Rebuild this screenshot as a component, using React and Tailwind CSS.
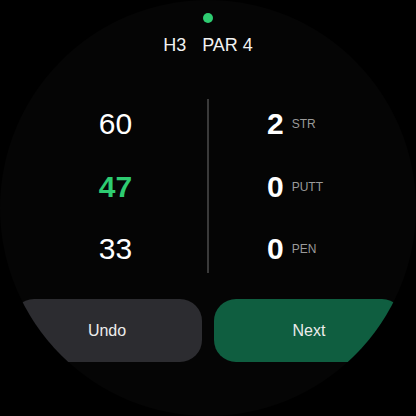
import React from 'react';

const distances = [
  { value: 60, active: false },
  { value: 47, active: true },
  { value: 33, active: false },
];

const counters = [
  { value: 2, label: 'STR' },
  { value: 0, label: 'PUTT' },
  { value: 0, label: 'PEN' },
];

const App = () => {
  return (
    <div className="w-[416px] h-[416px] bg-black" style={{ fontFamily: '"Liberation Sans", Arial, sans-serif' }}>
      <div className="w-full h-full rounded-full overflow-hidden bg-[#050505] flex flex-col items-center">
        {/* GPS status dot */}
        <div className="mt-[13px] w-2.5 h-2.5 rounded-full bg-[#2ecc71]" />

        {/* Hole header */}
        <div className="mt-[10px] flex items-center gap-4 text-[18px] leading-6 text-[#f2f2f2]">
          <span>H3</span>
          <span>PAR 4</span>
        </div>

        {/* Distances + score */}
        <div className="mt-[42px] w-full px-6 grid grid-cols-[1fr_2px_1fr] h-[174px]">
          <div className="flex flex-col items-center pt-[7px] gap-[26.5px]">
            {distances.map((d) => (
              <div
                key={d.value}
                className={
                  d.active
                    ? 'text-[30px] leading-9 font-bold text-[#2ecc71]'
                    : 'text-[30px] leading-9 text-white'
                }
              >
                {d.value}
              </div>
            ))}
          </div>

          <div className="bg-[#3a3a3a]" />

          <div className="flex flex-col items-start pl-[58px] pt-[7px] gap-[26.5px]">
            {counters.map((c) => (
              <div key={c.label} className="flex items-center h-9">
                <span className="text-[30px] leading-9 font-bold text-white">{c.value}</span>
                <span className="ml-2 text-[12px] leading-4 text-[#9a9a9a]">{c.label}</span>
              </div>
            ))}
          </div>
        </div>

        {/* Actions */}
        <div className="mt-[26px] w-full px-3 grid grid-cols-2 gap-3">
          <button className="h-[63px] rounded-[22px] bg-[#2c2c30] text-[16px] text-[#ececec]">
            Undo
          </button>
          <button className="h-[63px] rounded-[22px] bg-[#0f5e40] text-[16px] text-[#ececec]">
            Next
          </button>
        </div>
      </div>
    </div>
  );
};

export default App;
